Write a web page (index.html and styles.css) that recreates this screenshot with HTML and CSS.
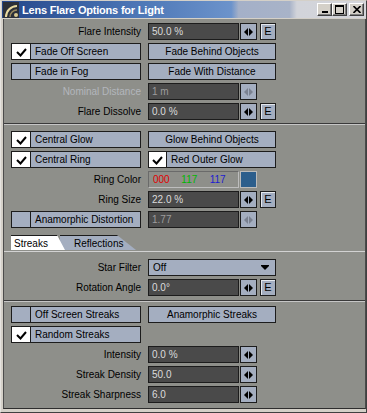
FILE: index.html
```html
<!DOCTYPE html>
<html>
<head>
<meta charset="utf-8">
<title>Lens Flare Options for Light</title>
<link rel="stylesheet" href="styles.css">
</head>
<body>
<div class="win">
  <div class="titlebar">
    <svg class="appicon" width="16" height="16" viewBox="0 0 16 16">
      <rect x="0" y="0" width="16" height="16" fill="#2b2f38"/>
      <path d="M3 15 A11 11 0 0 1 14 4" fill="none" stroke="#e8d9a0" stroke-width="2"/>
      <path d="M7 15 A7 7 0 0 1 14 8" fill="none" stroke="#9a8a60" stroke-width="1.5"/>
      <circle cx="13" cy="13" r="2" fill="#d8c890"/>
    </svg>
    <span class="title">Lens Flare Options for Light</span>
    <div class="wbtns">
      <div class="wbtn"><svg width="8" height="7" viewBox="0 0 8 7"><rect x="1" y="5" width="6" height="2" fill="#000"/></svg></div>
      <div class="wbtn"><svg width="9" height="9" viewBox="0 0 9 9"><rect x="0.5" y="0.5" width="8" height="8" fill="none" stroke="#000"/><rect x="0" y="0" width="9" height="2" fill="#000"/></svg></div>
      <div class="wbtn close"><svg width="8" height="7" viewBox="0 0 8 7"><path d="M0.5 0 L7.5 7 M7.5 0 L0.5 7" stroke="#000" stroke-width="1.6"/></svg></div>
    </div>
  </div>

  <div class="panel">
    <div class="sec s1">
      <div class="row">
        <span class="lbl">Flare Intensity</span>
        <span class="fld">50.0 %</span>
        <span class="spin"><svg width="9" height="8" viewBox="0 0 9 8"><path d="M0 4 L4 0 V8 Z M5 0 L9 4 L5 8 Z"/></svg></span>
        <span class="ebtn">E</span>
      </div>
      <div class="row">
        <div class="chk on"><span class="box"><svg width="18" height="15" viewBox="0 0 18 15"><path d="M5 8 L8.5 11.5 L14 5" fill="none" stroke="#000" stroke-width="2"/></svg></span><span class="ctext">Fade Off Screen</span></div>
        <div class="btn">Fade Behind Objects</div>
      </div>
      <div class="row">
        <div class="chk"><span class="box"></span><span class="ctext">Fade in Fog</span></div>
        <div class="btn">Fade With Distance</div>
      </div>
      <div class="row dis">
        <span class="lbl">Nominal Distance</span>
        <span class="fld">1 m</span>
        <span class="spin"><svg width="9" height="8" viewBox="0 0 9 8"><path d="M0 4 L4 0 V8 Z M5 0 L9 4 L5 8 Z"/></svg></span>
      </div>
      <div class="row">
        <span class="lbl">Flare Dissolve</span>
        <span class="fld">0.0 %</span>
        <span class="spin"><svg width="9" height="8" viewBox="0 0 9 8"><path d="M0 4 L4 0 V8 Z M5 0 L9 4 L5 8 Z"/></svg></span>
        <span class="ebtn">E</span>
      </div>
    </div>

    <div class="sep"></div>

    <div class="sec s2">
      <div class="row">
        <div class="chk on"><span class="box"><svg width="18" height="15" viewBox="0 0 18 15"><path d="M5 8 L8.5 11.5 L14 5" fill="none" stroke="#000" stroke-width="2"/></svg></span><span class="ctext">Central Glow</span></div>
        <div class="btn">Glow Behind Objects</div>
      </div>
      <div class="row">
        <div class="chk on"><span class="box"><svg width="18" height="15" viewBox="0 0 18 15"><path d="M5 8 L8.5 11.5 L14 5" fill="none" stroke="#000" stroke-width="2"/></svg></span><span class="ctext">Central Ring</span></div>
        <div class="chk on right"><span class="box"><svg width="17" height="15" viewBox="0 0 17 15"><path d="M4 8 L7.5 11.5 L13 5" fill="none" stroke="#000" stroke-width="2"/></svg></span><span class="ctext">Red Outer Glow</span></div>
      </div>
      <div class="row">
        <span class="lbl">Ring Color</span>
        <span class="colfld"><span class="cr">000</span><span class="cg">117</span><span class="cb">117</span></span>
        <span class="swatch"></span>
      </div>
      <div class="row">
        <span class="lbl">Ring Size</span>
        <span class="fld">22.0 %</span>
        <span class="spin"><svg width="9" height="8" viewBox="0 0 9 8"><path d="M0 4 L4 0 V8 Z M5 0 L9 4 L5 8 Z"/></svg></span>
        <span class="ebtn">E</span>
      </div>
      <div class="row">
        <div class="chk"><span class="box"></span><span class="ctext">Anamorphic Distortion</span></div>
        <span class="fld dimtext">1.77</span>
        <span class="spin off"><svg width="9" height="8" viewBox="0 0 9 8"><path d="M0 4 L4 0 V8 Z M5 0 L9 4 L5 8 Z"/></svg></span>
      </div>
    </div>

    <div class="tabs">
      <div class="tab t1">Streaks</div>
      <div class="tab t2">Reflections</div>
    </div>

    <div class="sec s3">
      <div class="row">
        <span class="lbl">Star Filter</span>
        <div class="drop"><span>Off</span><svg width="8" height="5" viewBox="0 0 8 5"><path d="M0 0 H8 V1 L4 5 L0 1 Z"/></svg></div>
      </div>
      <div class="row">
        <span class="lbl">Rotation Angle</span>
        <span class="fld">0.0°</span>
        <span class="spin"><svg width="9" height="8" viewBox="0 0 9 8"><path d="M0 4 L4 0 V8 Z M5 0 L9 4 L5 8 Z"/></svg></span>
        <span class="ebtn">E</span>
      </div>
    </div>

    <div class="sep"></div>

    <div class="sec s4">
      <div class="row">
        <div class="chk"><span class="box"></span><span class="ctext">Off Screen Streaks</span></div>
        <div class="btn">Anamorphic Streaks</div>
      </div>
      <div class="row">
        <div class="chk on"><span class="box"><svg width="18" height="15" viewBox="0 0 18 15"><path d="M5 8 L8.5 11.5 L14 5" fill="none" stroke="#000" stroke-width="2"/></svg></span><span class="ctext">Random Streaks</span></div>
      </div>
      <div class="row">
        <span class="lbl">Intensity</span>
        <span class="fld">0.0 %</span>
        <span class="spin"><svg width="9" height="8" viewBox="0 0 9 8"><path d="M0 4 L4 0 V8 Z M5 0 L9 4 L5 8 Z"/></svg></span>
      </div>
      <div class="row">
        <span class="lbl">Streak Density</span>
        <span class="fld">50.0</span>
        <span class="spin"><svg width="9" height="8" viewBox="0 0 9 8"><path d="M0 4 L4 0 V8 Z M5 0 L9 4 L5 8 Z"/></svg></span>
      </div>
      <div class="row">
        <span class="lbl">Streak Sharpness</span>
        <span class="fld">6.0</span>
        <span class="spin"><svg width="9" height="8" viewBox="0 0 9 8"><path d="M0 4 L4 0 V8 Z M5 0 L9 4 L5 8 Z"/></svg></span>
      </div>
    </div>
  </div>
</div>
</body>
</html>
```

FILE: styles.css
```css
* { box-sizing: border-box; }
html, body { margin: 0; padding: 0; }
body {
  width: 367px;
  height: 413px;
  overflow: hidden;
  background: #d4d0c8;
  font-family: "Liberation Sans", Arial, sans-serif;
  font-size: 10px;
  color: #000;
}
.win {
  width: 367px;
  height: 413px;
  border-top: 1px solid #d4d0c8;
  border-left: 1px solid #e6e4e0;
  border-right: 1px solid #404040;
  border-bottom: 1px solid #404040;
  padding: 0 0 3px 2px;
  display: flex;
  flex-direction: column;
}
.titlebar {
  height: 17px;
  margin: 0 0 1px -1px;
  display: flex;
  align-items: center;
  background: linear-gradient(to right, #24468a 0%, #4a74b4 35%, #6c93cb 63%, #a4b0c8 65%, #a8b3c8 79%, #d2d4da 81%, #d4d5da 100%);
}
.appicon { margin-left: 1px; flex: none; }
.title {
  margin-left: 3px;
  color: #fff;
  font-weight: bold;
  font-size: 11px;
  letter-spacing: -0.2px;
}
.wbtns { margin-left: auto; display: flex; margin-right: 2px; }
.wbtn {
  width: 15px;
  height: 13px;
  background: #d4d0c8;
  border-top: 1px solid #fff;
  border-left: 1px solid #fff;
  border-right: 1px solid #404040;
  border-bottom: 1px solid #404040;
  box-shadow: inset -1px -1px 0 #808080;
  display: flex;
  align-items: center;
  justify-content: center;
}
.wbtn.close { margin-left: 2px; }
.panel {
  flex: 1;
  background: #8e8f8a;
  border-left: 1px solid #4c4c4c;
  border-right: 1px solid #4a4a4a;
  border-bottom: 1px solid #2e2e2e;
  display: flex;
  flex-direction: column;
}
.sec { padding-left: 7px; }
.s1 { padding-top: 4px; }
.s2 { padding-top: 6px; }
.s3 { padding-top: 7px; }
.s4 { padding-top: 4px; }
.sep {
  height: 2px;
  margin-top: 3px;
  border-top: 1px solid #3a3a3a;
  border-bottom: 1px solid #c6c6c6;
}
.s3 + .sep { margin-top: 4px; }
.row {
  display: flex;
  height: 17px;
}
.row + .row { margin-top: 3px; }
.lbl {
  width: 130px;
  text-align: right;
  line-height: 17px;
  white-space: nowrap;
}
.dis .lbl { color: #b3b6bc; }
.fld {
  width: 91px;
  margin-left: 7px;
  background: #4a4a4a;
  border: 1px solid #1c1c1c;
  color: #dcdcdc;
  padding-left: 3px;
  line-height: 15px;
  white-space: nowrap;
}
.dis .fld, .fld.dimtext { color: #9c9c9c; }
.spin {
  width: 17px;
  margin-left: 1px;
  background: #a4aec0;
  border: 1px solid #1c1c1c;
  display: flex;
  align-items: center;
  justify-content: center;
}
.spin svg { fill: #000; }
.dis .spin svg, .spin.off svg { fill: #7a8190; }
.ebtn {
  width: 16px;
  margin-left: 3px;
  background: #a4aec0;
  border: 1px solid #1c1c1c;
  box-shadow: inset 1px 1px 0 #e4e8ee;
  text-align: center;
  line-height: 15px;
  font-size: 11px;
}
.chk {
  width: 130px;
  display: flex;
  background: #a4aec0;
  border: 1px solid #1c1c1c;
}
.chk .box {
  width: 19px;
  flex: none;
  border-right: 1px solid #1c1c1c;
  display: flex;
  align-items: center;
  justify-content: center;
}
.chk.on .box { background: #fff; }
.chk.right { width: 128px; margin-left: 7px; }
.chk.right .box { width: 18px; }
.ctext {
  padding-left: 4px;
  line-height: 15px;
  white-space: nowrap;
}
.btn {
  width: 128px;
  margin-left: 7px;
  background: #a4aec0;
  border: 1px solid #1c1c1c;
  text-align: center;
  line-height: 15px;
  white-space: nowrap;
}
.colfld {
  width: 91px;
  margin-left: 7px;
  border: 1px solid;
  border-color: #6a6a6a #bdbdbd #bdbdbd #6a6a6a;
  display: flex;
  line-height: 15px;
  padding-left: 4px;
}
.colfld span { width: 33px; }
.cr { color: #e00000; }
.cg { color: #00b800; }
.cb { color: #1c1cd0; }
.swatch {
  width: 17px;
  margin-left: 1px;
  border: 1px solid #bcbcbc;
  background: #2c5e8c;
}
.tabs {
  margin-top: 7px;
  height: 17px;
  border-bottom: 1px solid #d2d2d2;
  padding-left: 7px;
  display: flex;
}
.tab {
  height: 15px;
  line-height: 15px;
  border-top: 1px solid #1c1c1c;
  white-space: nowrap;
}
.t1 {
  width: 54px;
  background: #fff;
  padding-left: 3px;
  clip-path: polygon(0 0, 46px 0, 54px 100%, 0 100%);
  position: relative;
  z-index: 1;
}
.t2 {
  width: 76px;
  margin-left: -5px;
  background: #a4aec0;
  padding-left: 14px;
  clip-path: polygon(0 0, 57px 0, 76px 100%, 0 100%);
}
.drop {
  width: 128px;
  margin-left: 7px;
  background: #a4aec0;
  border: 1px solid #1c1c1c;
  display: flex;
  align-items: center;
  padding: 0 6px 0 4px;
  justify-content: space-between;
}
.drop svg { fill: #000; }
```
